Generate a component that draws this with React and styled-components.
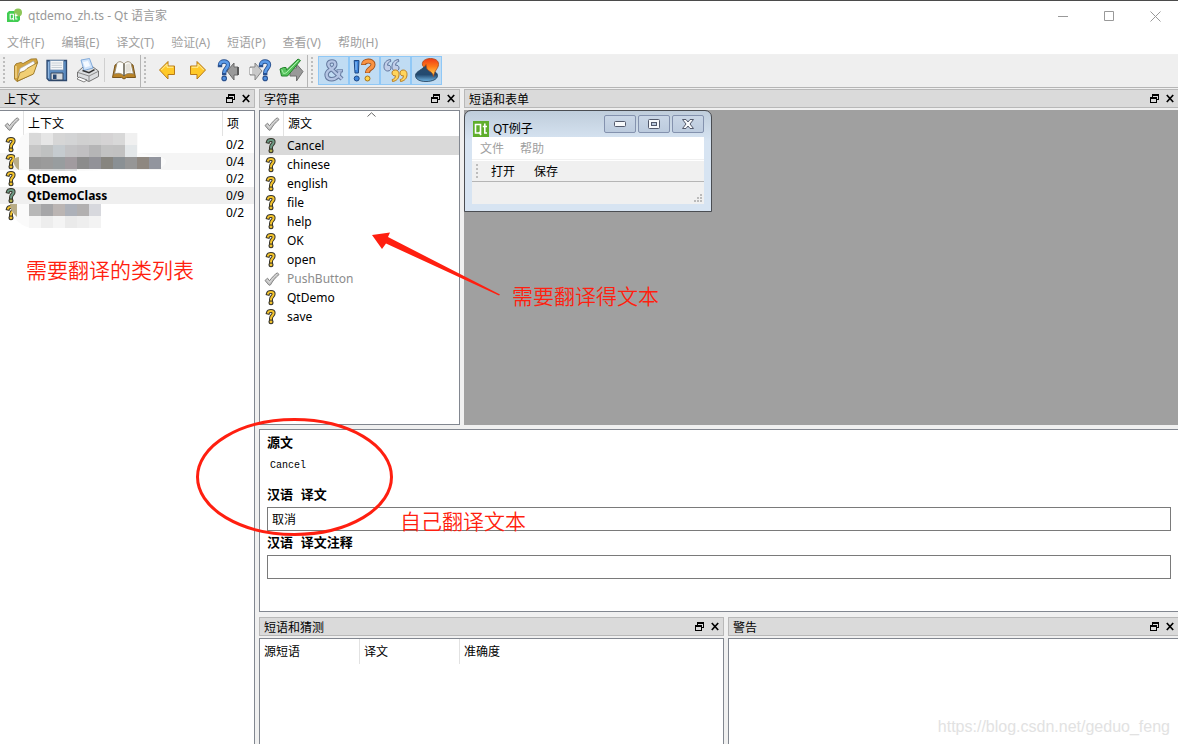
import React, { useState } from "react";
import styled, { createGlobalStyle } from "styled-components";

const contexts = [
  { name: "", count: "0/2" },
  { name: "", count: "0/4" },
  { name: "QtDemo", count: "0/2" },
  { name: "QtDemoClass", count: "0/9", active: true },
  { name: "", count: "0/2" },
];

const strings = [
  { text: "Cancel", active: true },
  { text: "chinese" },
  { text: "english" },
  { text: "file" },
  { text: "help" },
  { text: "OK" },
  { text: "open" },
  { text: "PushButton", done: true },
  { text: "QtDemo" },
  { text: "save" },
];

const menus = ["文件(F)", "编辑(E)", "译文(T)", "验证(A)", "短语(P)", "查看(V)", "帮助(H)"];

// pixelated names, one 12px block per colour
const mosaic = [
  { y: 22, h: 12, colors: ["#d9d9d9", "#e6e6e6", "#d6d6d6", "#d3d4d5", "#d0d0d0", "#d1d1d1", "#d5d3d4", "#d8d8d8", "#f0f0f0"] },
  { y: 34, h: 12, colors: ["#c6c6c6", "#bfc1c1", "#c5cbcf", "#c3c3c5", "#c0bfc1", "#b5b5b6", "#c2c2c2", "#c1c1c1", "#e3e7e9"] },
  { y: 46, h: 12, colors: ["#989898", "#9b9b9b", "#989d9f", "#a19b9f", "#8c8c8c", "#929298", "#87857f", "#8a9094", "#969696", "#8e8780", "#92959e"] },
  { y: 58, h: 2, colors: ["#d8d8d8", "#d4d4d4", "#d2d4d4", "#d8d8d8"] },
  { y: 93, h: 12, colors: ["#b8b8b8", "#a6a6a8", "#bbb5b3", "#adb1b9", "#b2b0b0", "#d7d8dd"] },
  { y: 105, h: 12, colors: ["#f5f5f5", "#ededed", "#f4f4f4", "#eaeaea", "#eeeeee", "#f3f3f3"] },
];

const QUESTION = "M4 4.6C4.6 2.4 9.6 2.2 9.6 5C9.6 7.4 7 7.6 7 10.4";

function QuestionIcon({ active }) {
  return (
    <CellIcon width="16" height="17" viewBox="0 0 16 17">
      <g fill="none" strokeLinecap="square">
        <path d={QUESTION} stroke="#38362c" strokeWidth="4" />
        <circle cx="7" cy="13.8" r="2.5" fill="#38362c" />
        <path d={QUESTION} stroke={active ? "#6d9a86" : "#f5c52e"} strokeWidth="2" />
        <circle cx="7" cy="13.8" r="1.4" fill={active ? "#b3b04a" : "#f5c52e"} />
      </g>
    </CellIcon>
  );
}

function CheckIcon() {
  return (
    <CellIcon width="16" height="16" viewBox="0 0 16 16">
      <path
        d="M1 9.5L3.5 7.2L5.6 9.8C8 6.4 10.5 3.6 13.4 1.8L15 3.6C11.5 6.4 8.8 9.8 6.4 14L5 14.2Z"
        fill="#c4c4c4"
        stroke="#858585"
      />
      <path d="M3.2 8.8L5.5 11.6C8 8 10.5 5 13.4 3" fill="none" stroke="#dcdcdc" />
    </CellIcon>
  );
}

function FloatIcon() {
  return (
    <svg width="9" height="9" viewBox="0 0 9 9" shapeRendering="crispEdges">
      <path d="M2 0H9V6H7V5H8V2H3V3H2ZM0 3H7V9H0ZM1 5V8H6V5Z" fill="#000" fillRule="evenodd" />
    </svg>
  );
}

function CloseIcon() {
  return (
    <svg width="9" height="9" viewBox="0 0 9 9">
      <path d="M.8 1L7.2 8M7.2 1L.8 8" stroke="#000" strokeWidth="1.7" />
    </svg>
  );
}

function AppLogo() {
  return (
    <svg width="17" height="16" viewBox="0 0 17 16">
      <path d="M3 3H14V12L12 14H1V5Z" fill="#41cd52" />
      <circle cx="12" cy="4.5" r="4" fill="#8cc657" />
      <path d="M4.2 6.2H7.4V11H4.2ZM6.5 10L8 12.2M9.8 5.5V11H11.5M8.8 7.4H11.5" fill="none" stroke="#fff" strokeWidth="1.1" />
    </svg>
  );
}

function FolderIcon() {
  return (
    <svg width="26" height="26" viewBox="0 0 26 26">
      <path d="M1.5 9L3 6.8L8 5.4L10 6.6L18 2L23.5 1.8L24.5 5L20 17L4 24.5L1.5 22Z" fill="#d3a540" stroke="#94701f" strokeWidth=".8" />
      <path d="M5 20L7 11.5L20.5 4L22 7L19 15Z" fill="#fbfbfb" stroke="#aaa" strokeWidth=".7" />
      <path d="M4 24.3L7 15.5L11.5 14L14 11.5L24.6 5.5L20.5 17Z" fill="#f1cf75" stroke="#94701f" strokeWidth=".8" />
      <path d="M3 9V21" stroke="#f4d689" strokeWidth="1.5" />
    </svg>
  );
}

function SaveIcon() {
  return (
    <svg width="24" height="26" viewBox="0 0 24 26">
      <path d="M2 3.5H21.5V23.5H4L2 21.5Z" fill="#5c8cc0" stroke="#2f4a70" strokeWidth="1.3" />
      <path d="M5 3.5H18.5V13H5Z" fill="#f4f6f8" stroke="#7390b0" strokeWidth=".8" />
      <path d="M6.5 6H17M6.5 8.3H17M6.5 10.5H17" stroke="#c8d0d6" />
      <path d="M6 16H18V23H6Z" fill="#d6dadd" stroke="#30445f" />
      <path d="M8 17.5H11.5V22H8Z" fill="#294872" />
      <path d="M3.5 5V21" stroke="#90b6e0" />
    </svg>
  );
}

function PrintIcon() {
  return (
    <svg width="26" height="26" viewBox="0 0 26 26">
      <path d="M2.5 15L8 10H18L23.5 14V19.5L14 24.5L2.5 20Z" fill="#dcdee0" stroke="#666" strokeWidth=".9" />
      <path d="M6 3L14.5 1.5L18 11L9 13.5Z" fill="#cfe3fa" stroke="#6b9bd2" strokeWidth=".8" />
      <path d="M8 5L13 4L15 9L10 10.5Z" fill="#f4f9ff" />
      <path d="M3 15.5L14 19L23 14.5M14 19V24" fill="none" stroke="#8a8a8a" />
      <path d="M7.5 13.5L14 15.6L19.5 12.6" fill="none" stroke="#333" strokeWidth="1.5" />
      <path d="M4 20L12 23L9 25L2 22Z" fill="#fff" stroke="#666" strokeWidth=".8" />
    </svg>
  );
}

function BookIcon() {
  return (
    <svg width="26" height="24" viewBox="0 0 26 24">
      <path d="M4 7L1.5 19.5H10.5L13 21L15.5 19.5H24.5L22 7L17 4L13 6L9 4Z" fill="#b98327" stroke="#6e4a0f" strokeWidth=".9" />
      <path d="M6 5C8 3 11 3.5 13 6C15 3.5 18 3 20 5L22.5 16C18 14.5 15 15.5 13 18C11 15.5 8 14.5 3.5 16Z" fill="#fdfdfa" stroke="#8b816b" strokeWidth=".8" />
      <path d="M13 6V18" stroke="#55513f" strokeWidth="1.4" />
      <path d="M14.5 7C16 5.5 17.5 5.2 19 5.6L20.5 14C18 13.5 16 14 14.5 15.5Z" fill="#e4e1d8" />
    </svg>
  );
}

function ArrowIcon({ flip }) {
  return (
    <svg width="20" height="22" viewBox="0 0 20 22">
      <g transform={flip ? "translate(20 0) scale(-1 1)" : undefined}>
        <path d="M2.5 11L11 2.5V7H17.5V15.5H11V20Z" fill="#ffc928" stroke="#b97a18" strokeLinejoin="round" />
        <path d="M4.3 11L10 5.3V8.2H16.3" fill="none" stroke="#fff1a5" />
      </g>
    </svg>
  );
}

const BIG_QUESTION = "M3 6C3 1.4 11 1.4 11 5.8C11 9.4 7.2 9.5 7.2 14";

function BlueQuestion({ x = 0 }) {
  return (
    <g transform={`translate(${x} 1)`} fill="none">
      <path d={BIG_QUESTION} stroke="#28508f" strokeWidth="4.4" strokeLinecap="square" />
      <circle cx="7.2" cy="19.4" r="2.8" fill="#28508f" />
      <path d={BIG_QUESTION} stroke="#5b9be8" strokeWidth="2.6" />
      <circle cx="7.2" cy="19.4" r="1.7" fill="#4f8fe0" />
    </g>
  );
}

function PrevUnfinishedIcon() {
  return (
    <svg width="24" height="25" viewBox="0 0 24 25">
      <path d="M10 13L17 5V9H21V17H17V22Z" fill="#9a9a9a" stroke="#6a6a6a" />
      <path d="M21 9V17" stroke="#5a5a5a" strokeWidth="2" />
      <BlueQuestion x={0} />
    </svg>
  );
}

function NextUnfinishedIcon() {
  return (
    <svg width="24" height="25" viewBox="0 0 24 25">
      <path d="M14 13L7 5V9H2V17H7V22Z" fill="#c9c9c9" stroke="#868686" />
      <path d="M3 10V16" stroke="#f5f5f5" strokeWidth="2" />
      <BlueQuestion x={10} />
    </svg>
  );
}

function DoneNextIcon() {
  return (
    <svg width="26" height="26" viewBox="0 0 26 26">
      <path d="M25 14.5L18.5 7V11H12V19H18.5V24Z" fill="#999" stroke="#717171" />
      <path d="M2 12L5.5 10.5H8L8.5 13L20 2L22.5 3.5L9.5 19H3.5Z" fill="#57c45e" stroke="#23822a" />
      <path d="M3.8 12.5L5.5 16.5L8 16L20.5 3.5" fill="none" stroke="#a6eda8" />
    </svg>
  );
}

function AmpersandIcon() {
  const d = "M20 21L8 9.5C5 6.4 6.4 3.4 10 3.4C13.8 3.4 14.4 7.6 11.2 9.8L8 11.8C2.6 15 4 21.2 9.8 21.2C14.6 21.2 17.4 17.4 17.6 13.4";
  return (
    <svg width="24" height="25" viewBox="0 0 24 25" fill="none">
      <path d={d} stroke="#65799f" strokeWidth="4.4" />
      <path d="M14.5 12.8H21" stroke="#65799f" strokeWidth="3" />
      <path d={d} stroke="#b4c5e4" strokeWidth="2.4" />
      <path d="M15.3 12.8H20.2" stroke="#b4c5e4" strokeWidth="1.4" />
    </svg>
  );
}

function PunctuationIcon() {
  return (
    <svg width="25" height="25" viewBox="0 0 25 25">
      <path d="M2.2 2.5H7L6.4 15H3Z" fill="#3e86dc" stroke="#1c4784" />
      <path d="M4 4V12" stroke="#9ac8fa" />
      <circle cx="4.7" cy="20.5" r="2.5" fill="#3e86dc" stroke="#1c4784" />
      <g fill="none">
        <path d="M11.5 7C11.5 1.8 21 1.8 21 6.5C21 11 15.5 10 15.5 15" stroke="#a3521b" strokeWidth="5" />
        <path d="M11.5 6.2C11.5 2 21 2 21 6.5C21 11 15.5 10 15.5 14.5" stroke="#f99343" strokeWidth="3.2" />
        <circle cx="15.5" cy="20.5" r="2.5" fill="#ffd34a" stroke="#a5741a" />
      </g>
    </svg>
  );
}

function QuotesIcon() {
  const mark = "M7.5 1.5C3.5 2 1 4.5 1 8.5C1 12 3 13 4.8 13C7 13 8 11.5 8 10C8 8 6.5 7 4.6 7.3C4.6 5.3 5.5 4 7.8 3.5Z";
  return (
    <svg width="26" height="25" viewBox="0 0 26 25">
      <g fill="#c1cee9" stroke="#5f739c">
        <path d={mark} />
        <path d={mark} transform="translate(8 0)" />
      </g>
      <g fill="#ffd45a" stroke="#b97f24">
        <path d={mark} transform="translate(17 25) rotate(180)" />
        <path d={mark} transform="translate(25 25) rotate(180)" />
      </g>
    </svg>
  );
}

function PlaceMarkerIcon() {
  return (
    <svg width="26" height="26" viewBox="0 0 26 26">
      <defs>
        <linearGradient id="hot" x2="0" y2="1">
          <stop offset="0" stopColor="#ee3a18" />
          <stop offset=".45" stopColor="#ff7a18" />
          <stop offset="1" stopColor="#ffe25a" />
        </linearGradient>
        <linearGradient id="cold" x2="0" y2="1">
          <stop offset="0" stopColor="#2b4c6c" />
          <stop offset=".6" stopColor="#234a70" />
          <stop offset="1" stopColor="#72b7e6" />
        </linearGradient>
      </defs>
      <path d="M12 7.5C13 13 23.5 13.5 23.5 18.5C23.5 22.5 18 24.5 12 24.5C6 24.5 1.5 22.5 1.5 18.5C1.5 14 9 13 12 7.5Z" fill="url(#cold)" stroke="#1c3854" strokeWidth=".8" />
      <path d="M8.5 8C7.5 3.8 12 1.5 16.5 1.5C21 1.5 24.8 3.5 24.5 7.5C24.2 12 20.5 13 19.5 19.5C18.5 14.5 15 14.5 13 12C12.5 10 12.2 9 12 7.5C10.8 10 9 10.5 8.5 8Z" fill="url(#hot)" stroke="#a8481b" strokeWidth=".8" />
    </svg>
  );
}

function MosaicOverlay() {
  return (
    <MosaicSvg width="180" height="120" viewBox="0 0 180 120">
      <path d="M20 27Q28 18 40 22H138V42L161 46Q172 50 160 57L80 60H30Q15 58 14 50Z" fill="#fafafa" />
      <path d="M13 50Q15 46 19 46V59Q15 57 13 50Z" fill="#b9ad88" />
      <path d="M11 93H101V117H30Q12 112 11 93Z" fill="#fafafa" />
      <path d="M10 93H17V106Q10 100 10 93Z" fill="#b9ad88" />
      {mosaic.map((row) =>
        row.colors.map((color, i) => (
          <rect key={row.y + "-" + i} x={29 + i * 12} y={row.y} width="12" height={row.h} fill={color} shapeRendering="crispEdges" />
        ))
      )}
    </MosaicSvg>
  );
}

function DockTitle({ title }) {
  return (
    <TitleStrip>
      <h2>{title}</h2>
      <DockButton aria-label="浮动">
        <FloatIcon />
      </DockButton>
      <DockButton aria-label="关闭">
        <CloseIcon />
      </DockButton>
    </TitleStrip>
  );
}

function FormPreview() {
  return (
    <SubWindow>
      <SubTitle>
        <svg width="16" height="16" viewBox="0 0 16 16">
          <path d="M0 0H16V16H0Z" fill="#5fae2c" />
          <path d="M2.5 3.5H7.5V12H2.5ZM6 11L8 14M11.8 2.5V12H14M9.8 5.5H14" fill="none" stroke="#fff" strokeWidth="1.6" />
        </svg>
        <span>QT例子</span>
        <SubButton aria-label="最小化">
          <svg width="12" height="6" viewBox="0 0 12 6">
            <rect x=".5" y=".5" width="11" height="5" rx="1" fill="#f7f9fb" stroke="#52596b" />
          </svg>
        </SubButton>
        <SubButton aria-label="最大化">
          <svg width="12" height="10" viewBox="0 0 12 10">
            <rect x=".5" y=".5" width="11" height="9" rx="1" fill="#f7f9fb" stroke="#52596b" />
            <rect x="3.5" y="3.5" width="5" height="3" fill="#b9c8db" stroke="#52596b" />
          </svg>
        </SubButton>
        <SubButton aria-label="关闭窗口">
          <svg width="12" height="10" viewBox="0 0 12 10">
            <path d="M.5 .5H4L6 3L8 .5H11.5L8 5L11.5 9.5H8L6 7L4 9.5H.5L4 5Z" fill="#f7f9fb" stroke="#52596b" />
          </svg>
        </SubButton>
      </SubTitle>
      <SubMenu>
        <button>文件</button>
        <button>帮助</button>
      </SubMenu>
      <SubTools>
        <Handle $small />
        <button>打开</button>
        <button>保存</button>
      </SubTools>
      <SubStatus>
        <svg width="8" height="8" viewBox="0 0 8 8" shapeRendering="crispEdges">
          <path d="M6 0H8V2H6ZM3 3H5V5H3ZM6 3H8V5H6ZM0 6H2V8H0ZM3 6H5V8H3ZM6 6H8V8H6Z" fill="#bbb" />
        </svg>
      </SubStatus>
    </SubWindow>
  );
}

function App() {
  const [translation, setTranslation] = useState("取消");
  const [comment, setComment] = useState("");

  return (
    <Window>
      <GlobalStyle />
      <TitleBar>
        <AppLogo />
        <h1>qtdemo_zh.ts - Qt 语言家</h1>
        <WindowButton aria-label="最小化">
          <svg width="11" height="11" viewBox="0 0 11 11">
            <path d="M0 5.5H10" stroke="#999" />
          </svg>
        </WindowButton>
        <WindowButton aria-label="最大化">
          <svg width="11" height="11" viewBox="0 0 11 11">
            <path d="M.5 .5H9.5V9.5H.5Z" fill="none" stroke="#999" />
          </svg>
        </WindowButton>
        <WindowButton aria-label="关闭">
          <svg width="11" height="11" viewBox="0 0 11 11">
            <path d="M.5 .5L10.5 10.5M10.5 .5L.5 10.5" stroke="#999" />
          </svg>
        </WindowButton>
      </TitleBar>
      <MenuBar>
        {menus.map((menu) => (
          <button key={menu}>{menu}</button>
        ))}
      </MenuBar>

      <ToolBars>
        <ToolGroup>
          <Handle />
          <ToolButton aria-label="打开"><FolderIcon /></ToolButton>
          <ToolButton aria-label="保存"><SaveIcon /></ToolButton>
          <ToolButton aria-label="打印"><PrintIcon /></ToolButton>
          <Separator />
          <ToolButton aria-label="短语书"><BookIcon /></ToolButton>
        </ToolGroup>
        <ToolGroup>
          <Handle />
          <ToolButton aria-label="上一个"><ArrowIcon /></ToolButton>
          <ToolButton aria-label="下一个"><ArrowIcon flip /></ToolButton>
          <ToolButton aria-label="上一个未完成"><PrevUnfinishedIcon /></ToolButton>
          <ToolButton aria-label="下一个未完成"><NextUnfinishedIcon /></ToolButton>
          <ToolButton aria-label="完成并下一个"><DoneNextIcon /></ToolButton>
        </ToolGroup>
        <ToolGroup>
          <Handle />
          <ToolButton $checked aria-pressed="true" aria-label="加速键"><AmpersandIcon /></ToolButton>
          <ToolButton $checked aria-pressed="true" aria-label="标点"><PunctuationIcon /></ToolButton>
          <ToolButton $checked aria-pressed="true" aria-label="短语匹配"><QuotesIcon /></ToolButton>
          <ToolButton $checked aria-pressed="true" aria-label="占位符"><PlaceMarkerIcon /></ToolButton>
        </ToolGroup>
      </ToolBars>

      <Workspace>
        <ContextDock>
          <DockTitle title="上下文" />
          <Frame>
            <DataTable $row={17}>
              <colgroup>
                <col width="23" />
                <col />
                <col width="32" />
              </colgroup>
              <thead>
                <tr>
                  <th><CheckIcon /></th>
                  <th>上下文</th>
                  <th>项</th>
                </tr>
              </thead>
              <tbody>
                {contexts.map((item, i) => (
                  <Row key={i} $bg={item.active ? "#efefef" : i % 2 ? "#f5f5f5" : "#fff"}>
                    <td><QuestionIcon active={item.active} /></td>
                    <BoldCell>{item.name}</BoldCell>
                    <td>{item.count}</td>
                  </Row>
                ))}
              </tbody>
            </DataTable>
            <MosaicOverlay />
          </Frame>
        </ContextDock>

        <Main>
          <TopRow>
            <StringDock>
              <DockTitle title="字符串" />
              <Frame>
                <DataTable $row={19}>
                  <colgroup>
                    <col width="23" />
                    <col />
                  </colgroup>
                  <thead>
                    <tr>
                      <th><CheckIcon /></th>
                      <th>
                        源文
                        <SortMark width="9" height="5" viewBox="0 0 9 5">
                          <path d="M.5 4.5L4.5 .8L8.5 4.5" fill="none" stroke="#666" />
                        </SortMark>
                      </th>
                    </tr>
                  </thead>
                  <tbody>
                    {strings.map((item) => (
                      <Row key={item.text} $bg={item.active ? "#d9d9d9" : "#fff"} $color={item.done && "#8c8c8c"}>
                        <td>{item.done ? <CheckIcon /> : <QuestionIcon active={item.active} />}</td>
                        <td>{item.text}</td>
                      </Row>
                    ))}
                  </tbody>
                </DataTable>
              </Frame>
            </StringDock>
            <Dock $grow={1}>
              <DockTitle title="短语和表单" />
              <MdiArea>
                <FormPreview />
              </MdiArea>
            </Dock>
          </TopRow>

          <Editor>
            <h3>源文</h3>
            <SourceText>Cancel</SourceText>
            <label htmlFor="translation">汉语 译文</label>
            <input id="translation" value={translation} onChange={(e) => setTranslation(e.target.value)} />
            <label htmlFor="comment">汉语 译文注释</label>
            <input id="comment" value={comment} onChange={(e) => setComment(e.target.value)} />
          </Editor>

          <BottomRow>
            <Dock $grow={465}>
              <DockTitle title="短语和猜测" />
              <Frame>
                <GuessTable>
                  <thead>
                    <tr>
                      <th>源短语</th>
                      <th>译文</th>
                      <th>准确度</th>
                    </tr>
                  </thead>
                </GuessTable>
              </Frame>
            </Dock>
            <Dock $grow={451}>
              <DockTitle title="警告" />
              <Frame />
            </Dock>
          </BottomRow>
        </Main>
      </Workspace>

      <Marks width="520" height="560" viewBox="0 0 520 560">
        <ellipse cx="294.5" cy="477" rx="97" ry="57.5" fill="none" stroke="#ff1f10" strokeWidth="3" />
        <path d="M372 235L390 232.5L388 237L500 294.5L499 295.5L386 243.5L382 249Z" fill="#ff1f10" />
      </Marks>
      <Note $x={26} $y={254}>需要翻译的类列表</Note>
      <Note $x={512} $y={280}>需要翻译得文本</Note>
      <Note $x={400} $y={505}>自己翻译文本</Note>
      <Watermark>https://blog.csdn.net/geduo_feng</Watermark>
    </Window>
  );
}

export default App;

const GlobalStyle = createGlobalStyle`
  * {
    box-sizing: border-box;
  }

  body {
    margin: 0;
    background: #f0f0f0;
    color: #000;
  }

  body, button, input {
    font-family: "Noto Sans", "Noto Sans CJK SC", sans-serif;
    font-size: 12px;
    line-height: 16px;
  }

  h1, h2, h3, p {
    margin: 0;
    font-size: 12px;
    font-weight: normal;
  }

  button {
    padding: 0;
    border: 0;
    background: none;
    color: inherit;
  }

  svg {
    display: block;
    flex: none;
  }
`;

const Window = styled.div`
  position: relative;
  display: flex;
  flex-direction: column;
  min-height: 100vh;
  overflow: hidden;
  border-top: 1px solid #4b4b4b;
`;

const TitleBar = styled.header`
  display: flex;
  align-items: center;
  height: 30px;
  padding-left: 6px;
  background: #fff;
  color: #999;

  h1 {
    flex: 1;
    padding-left: 5px;
  }
`;

const WindowButton = styled.button`
  display: flex;
  align-items: center;
  justify-content: center;
  width: 46px;
  height: 30px;
`;

const MenuBar = styled.nav`
  display: flex;
  height: 24px;
  background: #fff;
  border-bottom: 1px solid #f0f0f0;
  color: #a0a0a0;

  button {
    padding: 0 10px 0 7px;
  }
`;

const ToolBars = styled.div`
  display: flex;
  height: 33px;
  background: #efefef;
  border-bottom: 1px solid #b5b5b5;
`;

const ToolGroup = styled.div`
  display: flex;
  align-items: center;
  padding: 0 1px 2px 3px;
  border-right: 1px solid #b5b5b5;

  &:last-child {
    border-right: 0;
  }
`;

const Handle = styled.span`
  width: 2px;
  height: ${(props) => (props.$small ? "14px" : "26px")};
  margin-right: 5px;
  background: repeating-linear-gradient(#bdbdbd 0 2px, transparent 2px 4px);
`;

const ToolButton = styled.button`
  display: flex;
  align-items: center;
  justify-content: center;
  width: 31px;
  height: 29px;
  border: ${(props) => (props.$checked ? "1px solid #90c8f6" : "0")};
  background: ${(props) => (props.$checked ? "#c0dcf3" : "none")};
`;

const Separator = styled.span`
  width: 1px;
  height: 24px;
  margin: 0 3px 0 1px;
  background: #d0d0d0;
`;

const Workspace = styled.main`
  display: flex;
  flex: 1;
  gap: 4px;
  margin: 1px -1px 0;
`;

const Main = styled.div`
  display: flex;
  flex: 1;
  flex-direction: column;
  min-width: 0;
`;

const Dock = styled.section`
  display: flex;
  flex-direction: column;
  flex: ${(props) => props.$grow} 1 0;
  gap: 2px;
  min-width: 0;
`;

const ContextDock = styled(Dock)`
  flex: 0 0 256px;
`;

const StringDock = styled(Dock)`
  flex: 0 0 201px;
`;

const TitleStrip = styled.div`
  display: flex;
  align-items: center;
  height: 19px;
  padding-left: 4px;
  border: 1px solid #b8b8b8;
  background: #dadada;

  h2 {
    flex: 1;
    padding-top: 2px;
  }
`;

const DockButton = styled.button`
  display: flex;
  align-items: center;
  justify-content: center;
  width: 16px;
  height: 16px;
`;

const Frame = styled.div`
  position: relative;
  flex: 1;
  border: 1px solid #828790;
  background: #fff;
`;

const DataTable = styled.table`
  width: 100%;
  table-layout: fixed;
  border-spacing: 0;

  th {
    position: relative;
    height: 25px;
    padding: 0 0 0 4px;
    border-left: 1px solid #e2e2e2;
    font-weight: normal;
    text-align: left;
  }

  td {
    height: ${(props) => props.$row}px;
    padding: 0 0 0 4px;
  }

  th:first-child,
  td:first-child {
    padding: 0;
    border: 0;
  }
`;

const Row = styled.tr`
  background: ${(props) => props.$bg};
  color: ${(props) => props.$color || "#000"};
`;

const BoldCell = styled.td`
  font-weight: bold;
`;

const CellIcon = styled.svg`
  margin: 0 auto;
`;

const SortMark = styled.svg`
  position: absolute;
  top: 1px;
  left: calc(50% - 5px);
`;

const MosaicSvg = styled.svg`
  position: absolute;
  top: 0;
  left: 0;
`;

const TopRow = styled.div`
  display: flex;
  gap: 4px;
  height: 336px;
`;

const BottomRow = styled.div`
  display: flex;
  flex: 1;
  gap: 4px;
  min-height: 128px;
  margin-top: 5px;
`;

const MdiArea = styled.div`
  flex: 1;
  background: #a0a0a0;
`;

const SubWindow = styled.div`
  width: 248px;
  padding: 0 7px 7px;
  border: 1px solid #4a4d52;
  border-radius: 7px 7px 0 0;
  background: linear-gradient(#bfcddb, #d7e4f2 30px);
`;

const SubTitle = styled.div`
  display: flex;
  align-items: center;
  gap: 2px;
  height: 26px;

  > svg {
    align-self: flex-end;
    margin: 0 2px 0 1px;
  }

  span {
    flex: 1;
    align-self: flex-end;
  }
`;

const SubButton = styled.button`
  display: flex;
  align-items: center;
  justify-content: center;
  width: 32px;
  height: 18px;
  border: 1px solid #8492ae;
  border-radius: 2px;
  background: linear-gradient(#c9d6e6, #bccbde);
`;

const SubMenu = styled.div`
  display: flex;
  gap: 16px;
  height: 23px;
  padding: 2px 0 0 8px;
  border-bottom: 1px solid #f0f0f0;
  background: #fff;
  color: #a0a0a0;
`;

const SubTools = styled.div`
  display: flex;
  align-items: center;
  height: 22px;
  padding-left: 4px;
  border-top: 1px solid #fff;
  border-bottom: 1px solid #b5b5b5;
  background: #f0f0f0;

  button {
    padding: 2px 11px 0 8px;
  }
`;

const SubStatus = styled.div`
  display: flex;
  align-items: flex-end;
  justify-content: flex-end;
  height: 22px;
  padding: 2px;
  background: #f0f0f0;
`;

const Editor = styled.section`
  display: flex;
  flex-direction: column;
  gap: 3px;
  margin-top: 4px;
  padding: 4px 7px 32px;
  border: 1px solid #828790;
  background: #fff;

  h3,
  label {
    padding-top: 2px;
    font-family: "Liberation Mono", "Noto Sans CJK SC", monospace;
    font-size: 13px;
    font-weight: bold;
    line-height: 16px;
  }

  input {
    width: 100%;
    height: 24px;
    padding: 0 4px;
    border: 1px solid #7a7a7a;
    background: #fff;
  }
`;

const SourceText = styled.p`
  margin: 3px 0 9px;
  padding-left: 3px;
  font-family: "Liberation Mono", monospace;
  font-size: 10px;
  line-height: 16px;
`;

const GuessTable = styled.table`
  border-spacing: 0;

  th {
    width: 100px;
    height: 25px;
    padding: 0 4px;
    border-right: 1px solid #e2e2e2;
    font-weight: normal;
    text-align: left;
  }

  th:last-child {
    border-right: 0;
  }
`;

const Marks = styled.svg`
  position: absolute;
  top: -1px;
  left: 0;
  pointer-events: none;
`;

const Note = styled.span`
  position: absolute;
  top: ${(props) => props.$y}px;
  left: ${(props) => props.$x}px;
  color: #ff1f10;
  font-family: "Noto Sans CJK SC", sans-serif;
  font-size: 21px;
  font-weight: 350;
  line-height: 28px;
  pointer-events: none;
`;

const Watermark = styled.span`
  position: absolute;
  right: 8px;
  bottom: 8px;
  color: #e2e2e2;
  font-family: "Liberation Sans", sans-serif;
  font-size: 16px;
  line-height: 20px;
  pointer-events: none;
`;
